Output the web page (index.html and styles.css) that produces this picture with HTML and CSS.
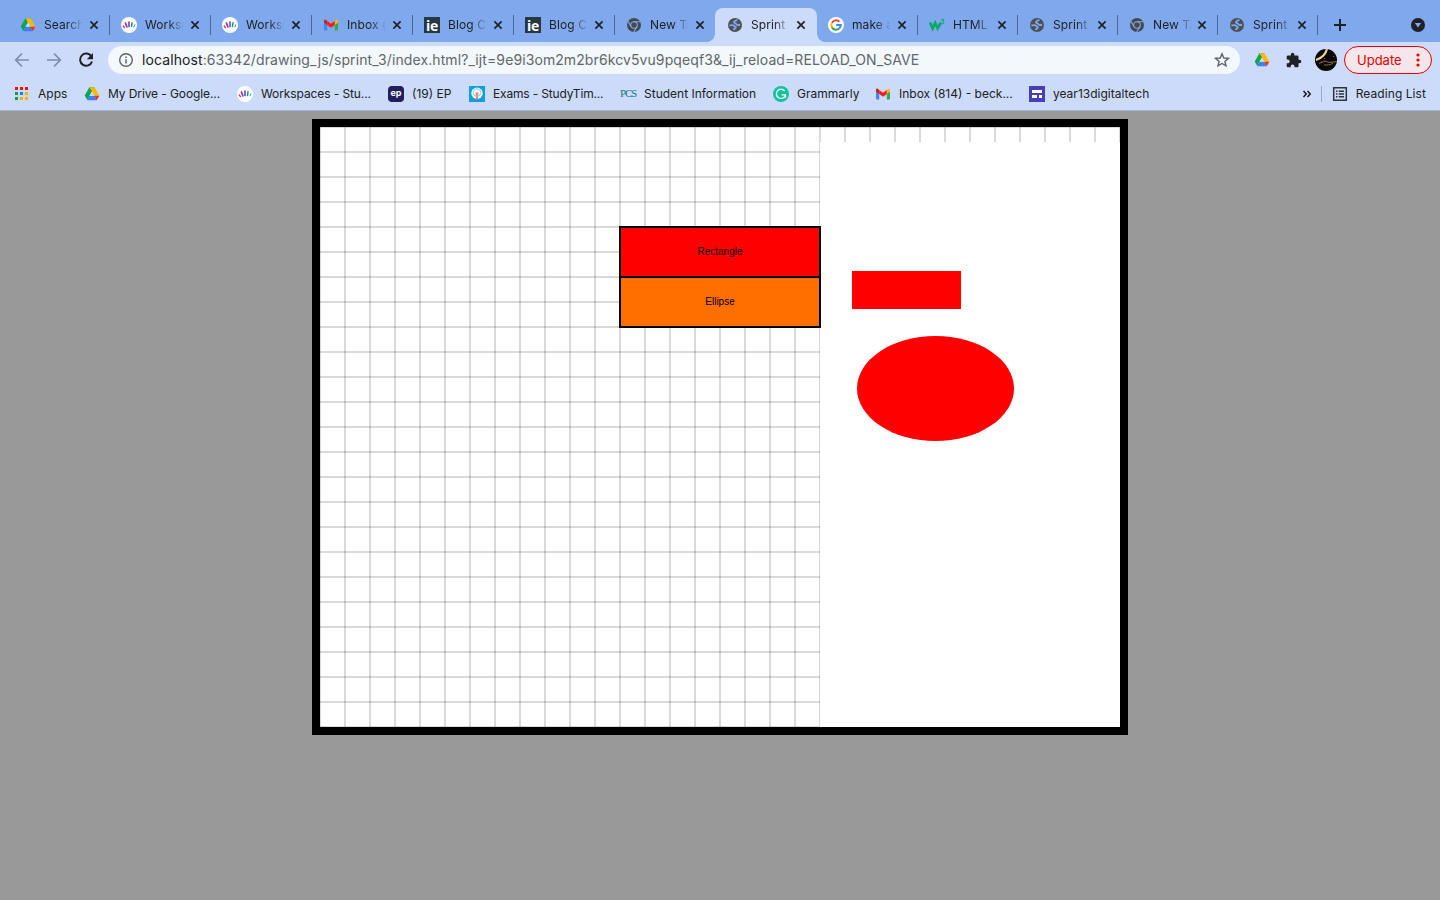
FILE: index.html
```
<!DOCTYPE html>
<html lang="en">
<head>
<meta charset="utf-8">
<title>Sprint 3</title>
<link rel="stylesheet" href="styles.css">
</head>
<body>
<svg class="defs" aria-hidden="true">
  <symbol id="drive" viewBox="0 0 16 16"><path fill="#0aa652" d="M5.4 1.3h5L4.9 10.9 3.3 14 .7 9.6z"/><path fill="#ffba00" d="M5.4 1.3h5.1L15.3 9.8h-4.9L8 5.6z"/><path fill="#4180f4" d="M5.4 9.8h5.1L12.8 14.3H3.1z"/><path fill="#ea3323" d="M10.4 9.8h4.9l-2.5 4.5z"/><path fill="#cbdbf9" d="M8 5.6 10.4 9.8H5.4z"/></symbol>
  <symbol id="work" viewBox="0 0 16 16"><circle cx="8" cy="8" r="8" fill="#fff"/><g fill="none" stroke-linecap="round"><path stroke="#e2353d" stroke-width="1.3" d="M2.2 9 3.4 10.5"/><path stroke="#8d43ab" stroke-width="1.8" d="M4.4 6 5.9 9.8"/><path stroke="#7c3fa5" stroke-width="1.6" d="M8 5v4.6"/><path stroke="#149b83" stroke-width="1.5" d="M11 5.7 10.5 9.5"/><path stroke="#25a878" stroke-width="1" d="M13.8 7.8 12.9 9.9"/></g></symbol>
  <symbol id="gmail" viewBox="0 0 16 16"><path fill="#4285f4" d="M1 4.5 4.2 7v6.5H2a1 1 0 0 1-1-1z"/><path fill="#34a853" d="M11.8 7 15 4.500v8a1 1 0 0 1-1 1h-2.200z"/><path fill="#fbbc04" d="M11.800 4 13 3c1-.7 2 0 2 1v1.400l-3.200 2.500z"/><path fill="#c5221f" d="M1 4c0-1.300 1.200-1.800 2.100-1.100L4.200 4v4L1 5.400z"/><path fill="#ff1a12" d="M4.200 4 8 6.800 11.800 4v4L8 10.800 4.200 8z"/></symbol>
  <symbol id="chrome" viewBox="0 0 16 16"><circle cx="8" cy="8" r="7" fill="#45494d"/><circle cx="8" cy="8" r="3.300" fill="none" stroke="#80a9ed" stroke-width="1.100"/><path d="M8 4.700h6.400M5.100 9.700 2 4.300M10.900 9.700 7.700 15" fill="none" stroke="#80a9ed" stroke-width="1.100"/></symbol>
  <symbol id="globe" viewBox="0 0 16 16"><circle cx="8" cy="8" r="7" fill="#4d5156"/><path fill="none" class="land" stroke-width="1.900" stroke-linejoin="round" d="M10.300 2.600C9.500 4 7.300 3.400 7 5.100c-.2 1.200 1.900.7 2.200 1.900.3 1.100 1.600 1.300 3.900.8M2.400 8.600c1.500-.7 3.900-.7 4.500.2.400.7 2.300.4 1.900 1.700-.3 1-1.700.7-2 2.700"/></symbol>
  <symbol id="x" viewBox="0 0 10 10"><path d="M1.400 1.400 8.600 8.600M8.600 1.400 1.400 8.600" stroke="#202124" stroke-width="1.700"/></symbol>
</svg>
<header class="browser">
  <nav class="tabs">
    <div class="tab"><svg class="ico"><use href="#drive"/></svg><span class="title">Search</span><svg class="close"><use href="#x"/></svg></div>
    <div class="tab"><svg class="ico"><use href="#work"/></svg><span class="title">Worksp</span><svg class="close"><use href="#x"/></svg></div>
    <div class="tab"><svg class="ico"><use href="#work"/></svg><span class="title">Worksp</span><svg class="close"><use href="#x"/></svg></div>
    <div class="tab"><svg class="ico"><use href="#gmail"/></svg><span class="title">Inbox (</span><svg class="close"><use href="#x"/></svg></div>
    <div class="tab"><span class="ico ie">ie</span><span class="title">Blog C</span><svg class="close"><use href="#x"/></svg></div>
    <div class="tab"><span class="ico ie">ie</span><span class="title">Blog C</span><svg class="close"><use href="#x"/></svg></div>
    <div class="tab plain"><svg class="ico"><use href="#chrome"/></svg><span class="title">New Ta</span><svg class="close"><use href="#x"/></svg></div>
    <div class="tab active"><svg class="ico"><use href="#globe"/></svg><span class="title">Sprint</span><svg class="close"><use href="#x"/></svg></div>
    <div class="tab"><svg class="ico" viewBox="0 0 16 16"><circle cx="8" cy="8" r="8" fill="#fff"/><g fill="none" stroke-width="2"><path stroke="#ea4335" d="M3.900 5.700A4.800 4.800 0 0 1 11.400 4.700"/><path stroke="#fbbc05" d="M3.800 10.300A4.800 4.800 0 0 1 3.900 5.700"/><path stroke="#34a853" d="M11.200 11.600A4.800 4.800 0 0 1 3.800 10.300"/><path stroke="#4285f4" d="M8.200 8h4.600A4.800 4.800 0 0 1 11.200 11.600"/></g></svg><span class="title">make a</span><svg class="close"><use href="#x"/></svg></div>
    <div class="tab short"><svg class="ico" viewBox="0 0 16 16"><path d="M1 5.500 3.700 11.400 6.200 6 8.700 11.400 12 5.500" fill="none" stroke="#09a768" stroke-width="2.700"/><path d="M12.200 2.600h2.800l-1.400 1.600c1.700.1 1.700 2.400 0 2.400-.7 0-1.100-.2-1.400-.7" fill="none" stroke="#09a768" stroke-width="1"/></svg><span class="title">HTML</span><svg class="close"><use href="#x"/></svg></div>
    <div class="tab short"><svg class="ico"><use href="#globe"/></svg><span class="title">Sprint</span><svg class="close"><use href="#x"/></svg></div>
    <div class="tab short"><svg class="ico"><use href="#chrome"/></svg><span class="title">New Ta</span><svg class="close"><use href="#x"/></svg></div>
    <div class="tab short"><svg class="ico"><use href="#globe"/></svg><span class="title">Sprint</span><svg class="close"><use href="#x"/></svg></div>
    <svg class="plus" viewBox="0 0 14 14"><path d="M7 1v12M1 7h12" stroke="#202124" stroke-width="2"/></svg>
    <svg class="search-tabs" viewBox="0 0 14 14"><circle cx="7" cy="7" r="7" fill="#202124"/><path d="M3.800 5h6.400L7 9.400z" fill="#80a9ed"/></svg>
  </nav>
  <div class="toolbar">
    <svg class="nav" viewBox="0 0 16 16"><path d="M15 8H2M8 1.500 1.700 8 8 14.500" fill="none" stroke="#7d8ca8" stroke-width="1.700"/></svg>
    <svg class="nav" viewBox="0 0 16 16"><path d="M1 8h13M8 1.500 14.300 8 8 14.500" fill="none" stroke="#7d8ca8" stroke-width="1.700"/></svg>
    <svg class="nav" viewBox="0 0 16 16"><path d="M13.400 4.500A6.100 6.100 0 1 0 14 9.500" fill="none" stroke="#202124" stroke-width="2"/><path d="M15 1v6.200H8.800z" fill="#202124"/></svg>
    <div class="address">
      <svg class="info" viewBox="0 0 14 14"><circle cx="7" cy="7" r="6.300" fill="none" stroke="#5f6368" stroke-width="1.400"/><path d="M7 6.200v4.300M7 3.500v1.500" stroke="#5f6368" stroke-width="1.500"/></svg>
      <span class="url"><b>localhost</b>:63342/drawing_js/sprint_3/index.html?_ijt=9e9i3om2m2br6kcv5vu9pqeqf3&amp;_ij_reload=RELOAD_ON_SAVE</span>
      <svg class="star" viewBox="0 0 16 16"><path d="M8 1.800 9.800 6 14.400 6.400 10.900 9.400 12 13.900 8 11.500 4 13.900 5.100 9.400 1.600 6.400 6.200 6z" fill="none" stroke="#5f6368" stroke-width="1.400"/></svg>
    </div>
    <svg class="ext"><use href="#drive"/></svg>
    <svg class="ext puzzle" viewBox="1 0 23 23"><path fill="#202124" d="M20.500 11H19V7c0-1.100-.9-2-2-2h-4V3.500a2.500 2.500 0 0 0-5 0V5H4c-1.100 0-2 .9-2 2v3.800h1.500a2.700 2.700 0 0 1 0 5.400H2V20c0 1.100.9 2 2 2h3.800v-1.500a2.700 2.700 0 0 1 5.400 0V22H17c1.100 0 2-.9 2-2v-4h1.500a2.500 2.500 0 0 0 0-5z"/></svg>
    <svg class="avatar" viewBox="0 0 22 22"><clipPath id="c"><circle cx="11" cy="11" r="11"/></clipPath><g clip-path="url(#c)"><path fill="#090707" d="M0 0h22v22H0z"/><path d="M12 0Q10 8 1 11" fill="none" stroke="#f3d592" stroke-width="2.200"/><path d="M4 14.500l6-2.500 4 1.500 8-1M9 16q5 .5 9-1.500" fill="none" stroke="#9a7748" stroke-width=".9"/><path d="M9 9.500h1m8-2h1M6 13h1" stroke="#b64a62"/></g></svg>
    <div class="update"><span>Update</span><svg viewBox="0 0 4 14"><g fill="#e60000"><circle cx="2" cy="2" r="1.600"/><circle cx="2" cy="7" r="1.600"/><circle cx="2" cy="12" r="1.600"/></g></svg></div>
  </div>
  <div class="bookmarks">
    <a class="bm apps"><svg viewBox="0 0 16 16"><path fill="#e8110f" d="M1 1h3v3H1zm5 0h3v3H6zm5 0h3v3h-3z"/><path fill="#0b9d58" d="M1 6h3v3H1zM1 11h3v3H1z"/><path fill="#1a82ff" d="M6 6h3v3H6z"/><path fill="#ffad00" d="M11 6h3v3h-3zm-5 5h3v3H6zm5 0h3v3h-3z"/></svg><span>Apps</span></a>
    <a class="bm drive"><svg><use href="#drive"/></svg><span>My Drive - Google...</span></a>
    <a class="bm work"><svg><use href="#work"/></svg><span>Workspaces - Stu...</span></a>
    <a class="bm ep"><i class="ep-logo">ep</i><span>(19) EP</span></a>
    <a class="bm exams"><svg viewBox="0 0 16 16"><path fill="#109fdc" d="M0 0h16v16H0z"/><circle cx="8" cy="7.200" r="5.700" fill="#eefaff"/><circle cx="8" cy="6.500" r="3.800" fill="none" stroke="#78c8e8" stroke-width=".8"/><path d="M8 6.500v7" stroke="#ef7b6b" stroke-width="2"/><path d="M6.600 6.500 7.300 11M9.400 6.500 8.700 11" stroke="#f4aaa0" stroke-width=".8"/></svg><span>Exams - StudyTim...</span></a>
    <a class="bm pcs"><i class="pcs-logo">PCS</i><span>Student Information</span></a>
    <a class="bm gram"><svg viewBox="0 0 16 16"><circle cx="8" cy="8" r="8" fill="#11c39a"/><path d="M11.600 5A4.600 4.600 0 1 0 12.300 9.500M8.700 8.800h3.800v3" fill="none" stroke="#fff" stroke-width="1.300"/></svg><span>Grammarly</span></a>
    <a class="bm mail"><svg><use href="#gmail"/></svg><span>Inbox (814) - beck...</span></a>
    <a class="bm year"><svg viewBox="0 0 16 16"><path fill="#4540b8" d="M0 0h16v16H0z"/><path fill="#fff" d="M3 4h10v3H3zm0 5h5v3H3zm7 0h3v3h-3z"/></svg><span>year13digitaltech</span></a>
    <svg class="more" viewBox="0 0 10 10"><path d="m1.500 2 2.700 3-2.700 3M5.500 2l2.700 3-2.700 3" fill="none" stroke="#202124" stroke-width="1.600"/></svg>
    <a class="bm reading"><svg viewBox="0 0 16 16"><path d="M1.700 1.700h12.600v12.600H1.700z" fill="none" stroke="#303338" stroke-width="1.500"/><path d="M4 5.200h1.500M4 8h1.500M4 10.800h1.500M6.700 5.200H12M6.700 8H12M6.700 10.800H12" stroke="#303338" stroke-width="1.400"/></svg><span>Reading List</span></a>
  </div>
</header>
<main class="page">
  <svg class="canvas" width="800" height="600" viewBox="0 0 800 600">
    <defs>
      <pattern id="cols" width="25" height="600" patternUnits="userSpaceOnUse"><path d="M0 0h1v600H0zM24 0h1v600h-1z" fill="#000" fill-opacity=".15"/></pattern>
      <pattern id="rows" width="800" height="25" patternUnits="userSpaceOnUse"><path d="M0 0h800v1H0zM0 24h800v1H0z" fill="#000" fill-opacity=".15"/></pattern>
    </defs>
    <rect width="800" height="600" fill="url(#cols)"/>
    <rect width="800" height="600" fill="url(#rows)"/>
    <rect x="500" y="15" width="300" height="585" fill="#fff"/>
    <g stroke="#000" stroke-width="2"><rect x="300" y="100" width="200" height="50" fill="#f00"/><rect x="300" y="150" width="200" height="50" fill="#ff6f00"/></g>
    <g class="label"><text x="400" y="128">Rectangle</text><text x="400" y="178">Ellipse</text></g>
    <rect x="532" y="144" width="109" height="38" fill="#f00"/>
    <ellipse cx="615.500" cy="261.500" rx="78.500" ry="52.500" fill="#f00"/>
  </svg>
</main>
</body>
</html>
```
FILE: styles.css
```
* { box-sizing: border-box; }
body { margin: 0; height: 900px; overflow: hidden; background: #999; font-family: Inter, sans-serif; color: #202124; }
svg { display: block; flex: none; }
.defs { position: absolute; width: 0; height: 0; }
.browser { height: 111px; background: #cbdbf9; border-bottom: 1px solid #a1b4d6; font-size: 12px; }
.tabs { height: 42px; padding: 8px 15px 0 9px; display: flex; background: #80a9ed; }
.tab { position: relative; flex: none; width: 101px; height: 34px; padding-left: 11px; display: flex; align-items: center; }
.tab.short { width: 100px; }
.tab.short .close { margin-left: 6px; }
.tab::after { content: ""; position: absolute; right: 0; top: 7px; width: 1px; height: 20px; background: #4b688f; }
.tab.plain::after, .tab.active::after { display: none; }
.tab.active { background: #cbdbf9; border-radius: 8px 8px 0 0; margin-left: -1px; width: 102px; padding-left: 12px; }
.tab.active::before { content: ""; position: absolute; left: -8px; right: -8px; bottom: 0; height: 8px; background: radial-gradient(circle at 0 0, transparent 7.5px, #cbdbf9 8px) left / 8px 8px no-repeat, radial-gradient(circle at 100% 0, transparent 7.5px, #cbdbf9 8px) right / 8px 8px no-repeat; }
.ico { width: 16px; height: 16px; flex: none; }
.land { stroke: #80a9ed; }
.tab.active .land { stroke: #cbdbf9; }
.ie { background: #263943; color: #fff; font: 700 14px/18px "Open Sans", sans-serif; text-align: center; overflow: hidden; letter-spacing: -.3px; }
.title { width: 38px; margin-left: 8px; white-space: nowrap; line-height: 18px; letter-spacing: .1px; -webkit-mask-image: linear-gradient(90deg, #000 60%, transparent 104%); mask-image: linear-gradient(90deg, #000 60%, transparent 104%); }
.close { width: 10px; height: 10px; margin-left: 7px; }
.plus { width: 14px; height: 14px; margin: 10px 0 0 15px; }
.search-tabs { width: 14px; height: 14px; margin: 10px 0 0 auto; }
.toolbar { height: 36px; padding: 0 8px 0 14px; display: flex; align-items: center; }
.nav { width: 16px; height: 16px; margin-right: 16px; }
.address { width: 1132px; height: 28px; margin-left: -2px; padding: 0 10px 0 11px; display: flex; align-items: center; border-radius: 14px; background: #f2f8fc; }
.info { width: 14px; height: 14px; margin-right: 9px; }
.url { font-size: 14px; line-height: 20px; color: #62666b; white-space: nowrap; letter-spacing: .094px; }
.url b { font-weight: 400; color: #202124; }
.star { width: 16px; height: 16px; margin-left: auto; }
.ext { width: 16px; height: 16px; margin-left: 14px; }
.puzzle { margin-left: 16px; }
.avatar { width: 22px; height: 22px; margin-left: 13px; }
.update { width: 88px; height: 28px; margin-left: 7px; padding: 0 11px 0 12px; display: flex; align-items: center; justify-content: space-between; border: 1px solid #e60000; border-radius: 14px; background: #f4e6ea; color: #e60000; font-size: 13px; }
.update svg { width: 4px; height: 14px; }
.bookmarks { height: 32px; padding-left: 14px; display: flex; align-items: center; }
.bm { display: flex; align-items: center; flex: none; white-space: nowrap; line-height: 18px; }
.bm svg, .bm i { width: 16px; height: 16px; margin-right: 8px; flex: none; }
.apps { width: 70px; }
.drive { width: 153px; letter-spacing: -.1px; }
.work { width: 151px; letter-spacing: -.1px; }
.ep { width: 81px; }
.exams { width: 151px; letter-spacing: -.17px; }
.pcs { width: 153px; }
.gram { width: 102px; }
.mail { width: 154px; }
.ep-logo { border-radius: 4px; background: #22205b; color: #fff; font: 700 9px/14px Inter, sans-serif; text-align: center; }
.pcs-logo { color: #127a80; font: 11px/15px "Liberation Serif", serif; letter-spacing: -1.200px; }
.more { width: 10px; height: 10px; margin-left: auto; }
.reading { margin-left: 9px; padding: 0 14px 0 10px; border-left: 1px solid #9aa9c6; line-height: 16px; letter-spacing: .07px; }
.page { padding-top: 8px; display: flex; justify-content: center; }
.canvas { box-sizing: content-box; border: 8px solid #000; background: #fff; }
.label { font: 10px "Liberation Sans", Arial, sans-serif; text-anchor: middle; }
```
